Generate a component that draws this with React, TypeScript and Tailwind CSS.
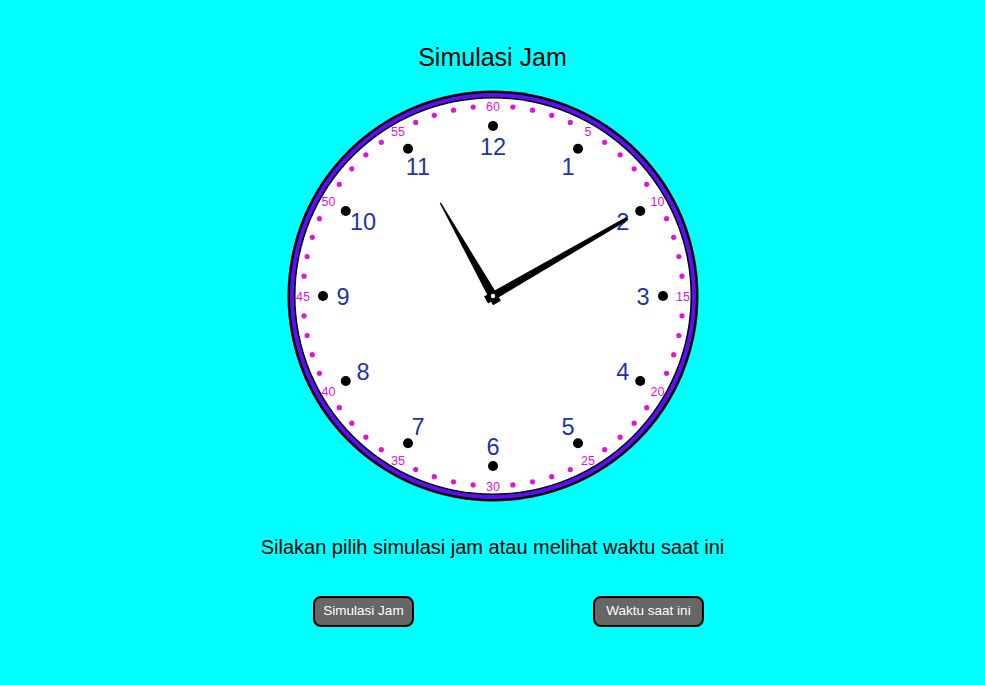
const CX = 0;
const CY = 0;

function polar(r: number, deg: number) {
  const a = (deg * Math.PI) / 180;
  return { x: CX + r * Math.sin(a), y: CY - r * Math.cos(a) };
}

function ClockFace() {
  const hours = Array.from({ length: 12 }, (_, i) => i + 1);
  const minutes = Array.from({ length: 60 }, (_, i) => i);

  return (
    <svg width="416" height="416" viewBox="-208 -208 416 416" className="block">
      <circle r="205.5" fill="#000" />
      <circle r="203" fill="#5a10f5" />
      <circle r="199" fill="#000" />
      <circle r="197.5" fill="#fff" />

      {minutes.map((m) => {
        if (m % 5 === 0) {
          const p = polar(190, m * 6);
          return (
            <text
              key={m}
              x={p.x}
              y={p.y + 0.5}
              textAnchor="middle"
              dominantBaseline="central"
              fontSize="12.5"
              fontFamily="'Liberation Sans', Arial, sans-serif"
              fill="#e014d8"
            >
              {m === 0 ? 60 : m}
            </text>
          );
        }
        const p = polar(190, m * 6);
        return <circle key={m} cx={p.x} cy={p.y} r="2.6" fill="#e014d8" />;
      })}

      {hours.map((h) => {
        const d = polar(170, h * 30);
        const n = polar(150, h * 30);
        return (
          <g key={h}>
            <circle cx={d.x} cy={d.y} r="5" fill="#000" />
            <text
              x={n.x}
              y={n.y + 1}
              textAnchor="middle"
              dominantBaseline="central"
              fontSize="23.5"
              fontFamily="'Liberation Sans', Arial, sans-serif"
              fill="#1d35a6"
            >
              {h}
            </text>
          </g>
        );
      })}

      {/* hour hand */}
      <polygon
        points="-4.5,8 4.5,8 4.5,-3 0.6,-107 -0.6,-107 -4.5,-3"
        fill="#000"
        transform="rotate(-29.5)"
      />
      {/* minute hand */}
      <polygon
        points="-4,8 4,8 4,-3 1.8,-155 -1.8,-155 -4,-3"
        fill="#000"
        transform="rotate(60)"
      />
      <circle r="2.2" fill="#fff" />
    </svg>
  );
}

export default function App() {
  return (
    <div
      className="w-full h-[685px] bg-[#00ffff] flex flex-col items-center text-black"
      style={{ fontFamily: "'Liberation Sans', Arial, sans-serif" }}
    >
      <h1 className="mt-[43px] text-[25px] leading-[28px]">Simulasi Jam</h1>

      <div className="mt-[17px]">
        <ClockFace />
      </div>

      <p className="mt-[31px] text-[20px] leading-[24px]">
        Silakan pilih simulasi jam atau melihat waktu saat ini
      </p>

      <div className="mt-[37px] w-full flex pl-[313px] gap-[179px]">
        <button className="w-[101px] h-[31px] rounded-[8px] border-2 border-black bg-[#666666] text-white text-[13.5px]">
          Simulasi Jam
        </button>
        <button className="w-[111px] h-[31px] rounded-[8px] border-2 border-black bg-[#666666] text-white text-[13.5px]">
          Waktu saat ini
        </button>
      </div>
    </div>
  );
}
